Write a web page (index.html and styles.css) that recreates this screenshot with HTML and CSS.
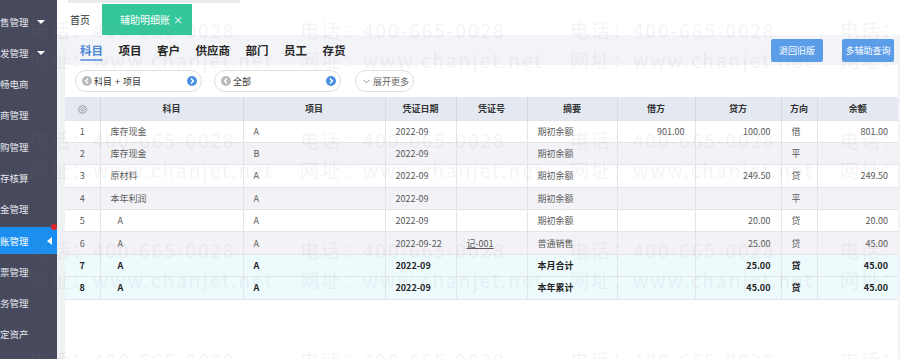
FILE: index.html
```html
<!DOCTYPE html>
<html lang="zh-CN">

<head>
    <meta charset="UTF-8">
    <meta name="viewport" content="width=device-width, initial-scale=1.0">
    <title>辅助明细账</title>
    <link rel="stylesheet" href="styles.css">
</head>

<body>
    <div class="app">
        <!-- 左侧菜单 -->
        <aside class="sidebar">
            <div class="menu-item"><span class="menu-label">销售管理</span><i class="down"></i></div>
            <div class="menu-item"><span class="menu-label">批发管理</span><i class="down"></i></div>
            <div class="menu-item"><span class="menu-label">好畅电商</span></div>
            <div class="menu-item"><span class="menu-label">供应商管理</span></div>
            <div class="menu-item"><span class="menu-label">采购管理</span></div>
            <div class="menu-item"><span class="menu-label">库存核算</span></div>
            <div class="menu-item"><span class="menu-label">资金管理</span></div>
            <div class="menu-item active"><span class="menu-label">总账管理</span><i class="left"></i><b class="dot"></b></div>
            <div class="menu-item"><span class="menu-label">发票管理</span></div>
            <div class="menu-item"><span class="menu-label">税务管理</span></div>
            <div class="menu-item"><span class="menu-label">固定资产</span></div>
        </aside>

        <main class="main">
            <div class="topline"><span></span></div>
            <div class="tabs">
                <span class="tab">首页</span>
                <span class="tab active">辅助明细账<i class="close">×</i></span>
            </div>

            <div class="panel">
                <div class="subbar">
                    <nav class="types">
                        <span class="type on">科目</span>
                        <span class="type">项目</span>
                        <span class="type">客户</span>
                        <span class="type">供应商</span>
                        <span class="type">部门</span>
                        <span class="type">员工</span>
                        <span class="type">存货</span>
                    </nav>
                    <div class="actions">
                        <button class="btn">退回旧版</button>
                        <button class="btn">多辅助查询</button>
                    </div>
                </div>

                <div class="filters">
                    <div class="pill">
                        <svg class="circ" viewBox="0 0 10 10"><circle cx="5" cy="5" r="5" fill="#b9b9bd"/><path d="M6 2.6 3.6 5 6 7.4" fill="none" stroke="#fff" stroke-width="1.4"/></svg>
                        <span class="pill-text">科目 + 项目</span>
                        <svg class="circ next" viewBox="0 0 10 10"><circle cx="5" cy="5" r="5" fill="#4b8fe2"/><path d="M4 2.6 6.4 5 4 7.4" fill="none" stroke="#fff" stroke-width="1.4"/></svg>
                    </div>
                    <div class="pill">
                        <svg class="circ" viewBox="0 0 10 10"><circle cx="5" cy="5" r="5" fill="#b9b9bd"/><path d="M6 2.6 3.6 5 6 7.4" fill="none" stroke="#fff" stroke-width="1.4"/></svg>
                        <span class="pill-text">全部</span>
                        <svg class="circ next" viewBox="0 0 10 10"><circle cx="5" cy="5" r="5" fill="#4b8fe2"/><path d="M4 2.6 6.4 5 4 7.4" fill="none" stroke="#fff" stroke-width="1.4"/></svg>
                    </div>
                    <div class="pill more">
                        <svg class="chev" viewBox="0 0 8 5"><path d="M.8 .8 4 4 7.2 .8" fill="none" stroke="#888" stroke-width="1"/></svg>
                        展开更多
                    </div>
                </div>

                <table class="grid">
                    <colgroup>
                        <col style="width:35px">
                        <col style="width:143px">
                        <col style="width:142px">
                        <col style="width:71px">
                        <col style="width:71px">
                        <col style="width:90px">
                        <col style="width:78px">
                        <col style="width:86px">
                        <col style="width:36px">
                        <col style="width:81px">
                    </colgroup>
                    <thead>
                        <tr>
                            <th><svg class="gear" viewBox="0 0 12 12"><path d="M6 1.2l1 1.3 1.6-.4.3 1.6 1.5.7-.7 1.5.7 1.5-1.5.7-.3 1.6-1.6-.4L6 10.8l-1-1.3-1.6.4-.3-1.6-1.5-.7.7-1.5-.7-1.5 1.5-.7.3-1.6 1.6.4z" fill="none" stroke="#8a8f99" stroke-width=".9"/><circle cx="6" cy="6" r="1.7" fill="none" stroke="#8a8f99" stroke-width=".9"/></svg></th>
                            <th>科目</th>
                            <th>项目</th>
                            <th>凭证日期</th>
                            <th>凭证号</th>
                            <th>摘要</th>
                            <th>借方</th>
                            <th>贷方</th>
                            <th>方向</th>
                            <th>余额</th>
                        </tr>
                    </thead>
                    <tbody>
                        <tr>
                            <td class="no">1</td><td>库存现金</td><td>A</td><td>2022-09</td><td></td><td>期初余额</td>
                            <td class="num">901.00</td><td class="num">100.00</td><td>借</td><td class="num">801.00</td>
                        </tr>
                        <tr>
                            <td class="no">2</td><td>库存现金</td><td>B</td><td>2022-09</td><td></td><td>期初余额</td>
                            <td class="num"></td><td class="num"></td><td>平</td><td class="num"></td>
                        </tr>
                        <tr>
                            <td class="no">3</td><td>原材料</td><td>A</td><td>2022-09</td><td></td><td>期初余额</td>
                            <td class="num"></td><td class="num">249.50</td><td>贷</td><td class="num">249.50</td>
                        </tr>
                        <tr>
                            <td class="no">4</td><td>本年利润</td><td>A</td><td>2022-09</td><td></td><td>期初余额</td>
                            <td class="num"></td><td class="num"></td><td>平</td><td class="num"></td>
                        </tr>
                        <tr>
                            <td class="no">5</td><td class="sub">A</td><td>A</td><td>2022-09</td><td></td><td>期初余额</td>
                            <td class="num"></td><td class="num">20.00</td><td>贷</td><td class="num">20.00</td>
                        </tr>
                        <tr>
                            <td class="no">6</td><td class="sub">A</td><td>A</td><td>2022-09-22</td><td><a href="#" class="voucher">记-001</a></td><td>普通销售</td>
                            <td class="num"></td><td class="num">25.00</td><td>贷</td><td class="num">45.00</td>
                        </tr>
                        <tr class="total">
                            <td class="no">7</td><td class="sub">A</td><td>A</td><td>2022-09</td><td></td><td>本月合计</td>
                            <td class="num"></td><td class="num">25.00</td><td>贷</td><td class="num">45.00</td>
                        </tr>
                        <tr class="total">
                            <td class="no">8</td><td class="sub">A</td><td>A</td><td>2022-09</td><td></td><td>本年累计</td>
                            <td class="num"></td><td class="num">45.00</td><td>贷</td><td class="num">45.00</td>
                        </tr>
                    </tbody>
                </table>
            </div>
        </main>
    </div>

    <!-- 水印 -->
    <div class="watermark">
        <div class="wm">电话：400-665-0028<br>网址：www.chanjet.net</div>
        <div class="wm">电话：400-665-0028<br>网址：www.chanjet.net</div>
        <div class="wm">电话：400-665-0028<br>网址：www.chanjet.net</div>
        <div class="wm">电话：400-665-0028<br>网址：www.chanjet.net</div>
        <div class="wm">电话：400-665-0028<br>网址：www.chanjet.net</div>
        <div class="wm">电话：400-665-0028<br>网址：www.chanjet.net</div>
        <div class="wm">电话：400-665-0028<br>网址：www.chanjet.net</div>
        <div class="wm">电话：400-665-0028<br>网址：www.chanjet.net</div>
        <div class="wm">电话：400-665-0028<br>网址：www.chanjet.net</div>
        <div class="wm">电话：400-665-0028<br>网址：www.chanjet.net</div>
        <div class="wm">电话：400-665-0028<br>网址：www.chanjet.net</div>
        <div class="wm">电话：400-665-0028<br>网址：www.chanjet.net</div>
        <div class="wm">电话：400-665-0028<br>网址：www.chanjet.net</div>
        <div class="wm">电话：400-665-0028<br>网址：www.chanjet.net</div>
        <div class="wm">电话：400-665-0028<br>网址：www.chanjet.net</div>
        <div class="wm">电话：400-665-0028<br>网址：www.chanjet.net</div>
    </div>
</body>

</html>
```

FILE: styles.css
```css
* {
    margin: 0;
    padding: 0;
    box-sizing: border-box;
}

html,
body {
    height: 100%;
    width: 100%;
    overflow: hidden;
}

body {
    font-family: "Noto Sans CJK SC", "Noto Sans", sans-serif;
    background: #fff;
}

.app {
    display: flex;
    height: 100%;
}

/* 左侧菜单 */
.sidebar {
    width: 57px;
    flex: none;
    background: #464a5c;
    padding-top: 8px;
    overflow: hidden;
}

.menu-item {
    position: relative;
    height: 27px;
    margin-bottom: 4.3px;
    display: flex;
    align-items: center;
    color: #e6e7ec;
    font-size: 9.5px;
}

.menu-label {
    width: 28.5px;
    flex: none;
    display: flex;
    justify-content: flex-end;
    white-space: nowrap;
}

.down {
    margin-left: 8px;
    border-left: 4px solid transparent;
    border-right: 4px solid transparent;
    border-top: 4px solid #fff;
}

.menu-item.active {
    background: #1a8ff0;
    color: #fff;
}

.left {
    margin-left: auto;
    margin-right: 5px;
    border-top: 4px solid transparent;
    border-bottom: 4px solid transparent;
    border-right: 5px solid #fff;
}

.dot {
    position: absolute;
    right: 0;
    top: -3px;
    width: 6px;
    height: 6px;
    border-radius: 50%;
    background: #e0262b;
}

/* 主区域 */
.main {
    flex: 1;
    display: flex;
    flex-direction: column;
    background: #f1f2f5;
}

.topline {
    height: 3px;
    background: #fff;
    padding-left: 11px;
}

.topline span {
    display: block;
    width: 172px;
    height: 3px;
    background: #e9eaec;
}

.tabs {
    height: 32px;
    display: flex;
    align-items: flex-end;
    padding-left: 13px;
    background: #fff;
}

.tab {
    height: 31px;
    display: flex;
    align-items: center;
    padding-right: 12px;
    font-size: 10px;
    color: #333;
}

.tab.active {
    background: #35c79c;
    color: #fff;
    padding: 0 9px 0 18px;
}

.close {
    font-style: normal;
    margin-left: 3px;
    font-size: 10px;
}

.panel {
    flex: 1;
    margin: 0 2px 0 8px;
    background: #fff;
}

.subbar {
    height: 30px;
    display: flex;
    align-items: center;
    justify-content: space-between;
    padding: 0 4px 0 15px;
    background: #f3f4f7;
}

.types {
    display: flex;
    gap: 15.5px;
    height: 100%;
}

.type {
    position: relative;
    display: flex;
    align-items: center;
    font-size: 11.5px;
    font-weight: bold;
    color: #262626;
}

.type.on {
    color: #4b86d3;
}

.type.on::after {
    content: "";
    position: absolute;
    left: 0;
    right: 0;
    bottom: 4px;
    height: 2px;
    border-radius: 1px;
    background: #79a5e2;
}

.actions {
    display: flex;
    gap: 19px;
}

.btn {
    width: 52px;
    height: 23px;
    border: 0;
    border-radius: 2px;
    background: #5b9de9;
    color: #fff;
    font-family: inherit;
    font-size: 9px;
}

/* 筛选 */
.filters {
    height: 32px;
    display: flex;
    align-items: center;
    gap: 12px;
    padding-left: 10px;
}

.pill {
    width: 127px;
    height: 22px;
    display: flex;
    align-items: center;
    padding: 0 4px 0 6px;
    border: 1px solid #dcdfe5;
    border-radius: 11px;
    font-size: 9px;
    color: #333;
}

.circ {
    width: 10px;
    height: 10px;
    flex: none;
}

.pill-text {
    margin-left: 2px;
    word-spacing: 1px;
}

.circ.next {
    margin-left: auto;
}

.pill.more {
    width: 59px;
    margin-left: 2px;
    padding: 0 0 0 7px;
    gap: 3px;
    color: #666;
}

.chev {
    width: 7px;
    height: 5px;
}

/* 表格 */
.grid {
    width: 100%;
    table-layout: fixed;
    border-collapse: collapse;
    font-size: 9px;
}

.grid th {
    height: 23px;
    background: #e4e9f1;
    border-right: 1px solid #d4dae4;
    color: #333;
    font-weight: bold;
    text-align: center;
}

.grid th:last-child {
    border-right: 0;
}

.gear {
    width: 11px;
    height: 11px;
    vertical-align: middle;
}

.grid tbody tr {
    height: 22.4px;
}

.grid td {
    padding: 0 10px;
    border: 1px solid #e3e5ea;
    color: #5a5a5a;
    white-space: nowrap;
}

.grid td:first-child {
    border-left: 0;
}

.grid td:last-child {
    border-right: 0;
}

.grid tbody tr:nth-child(even) {
    background: #f3f3f7;
}

.grid tbody tr.total {
    background: #eefbfd;
}

.grid tr.total td {
    font-weight: bold;
    color: #222;
}

.grid td.no {
    text-align: center;
    padding: 0;
}

.grid td.sub {
    padding-left: 17px;
}

.grid td.num {
    text-align: right;
}

.voucher {
    color: #5a5a5a;
}

/* 水印 */
.watermark {
    position: fixed;
    top: 0;
    left: 0;
    right: 0;
    bottom: 0;
    display: grid;
    grid-template-columns: repeat(4, 270px);
    grid-auto-rows: 110px;
    padding: 15px 0 0 30px;
    overflow: hidden;
    pointer-events: none;
}

.wm {
    font-size: 19px;
    line-height: 30px;
    letter-spacing: 2px;
    color: rgba(130, 130, 140, 0.09);
    white-space: nowrap;
}
```
